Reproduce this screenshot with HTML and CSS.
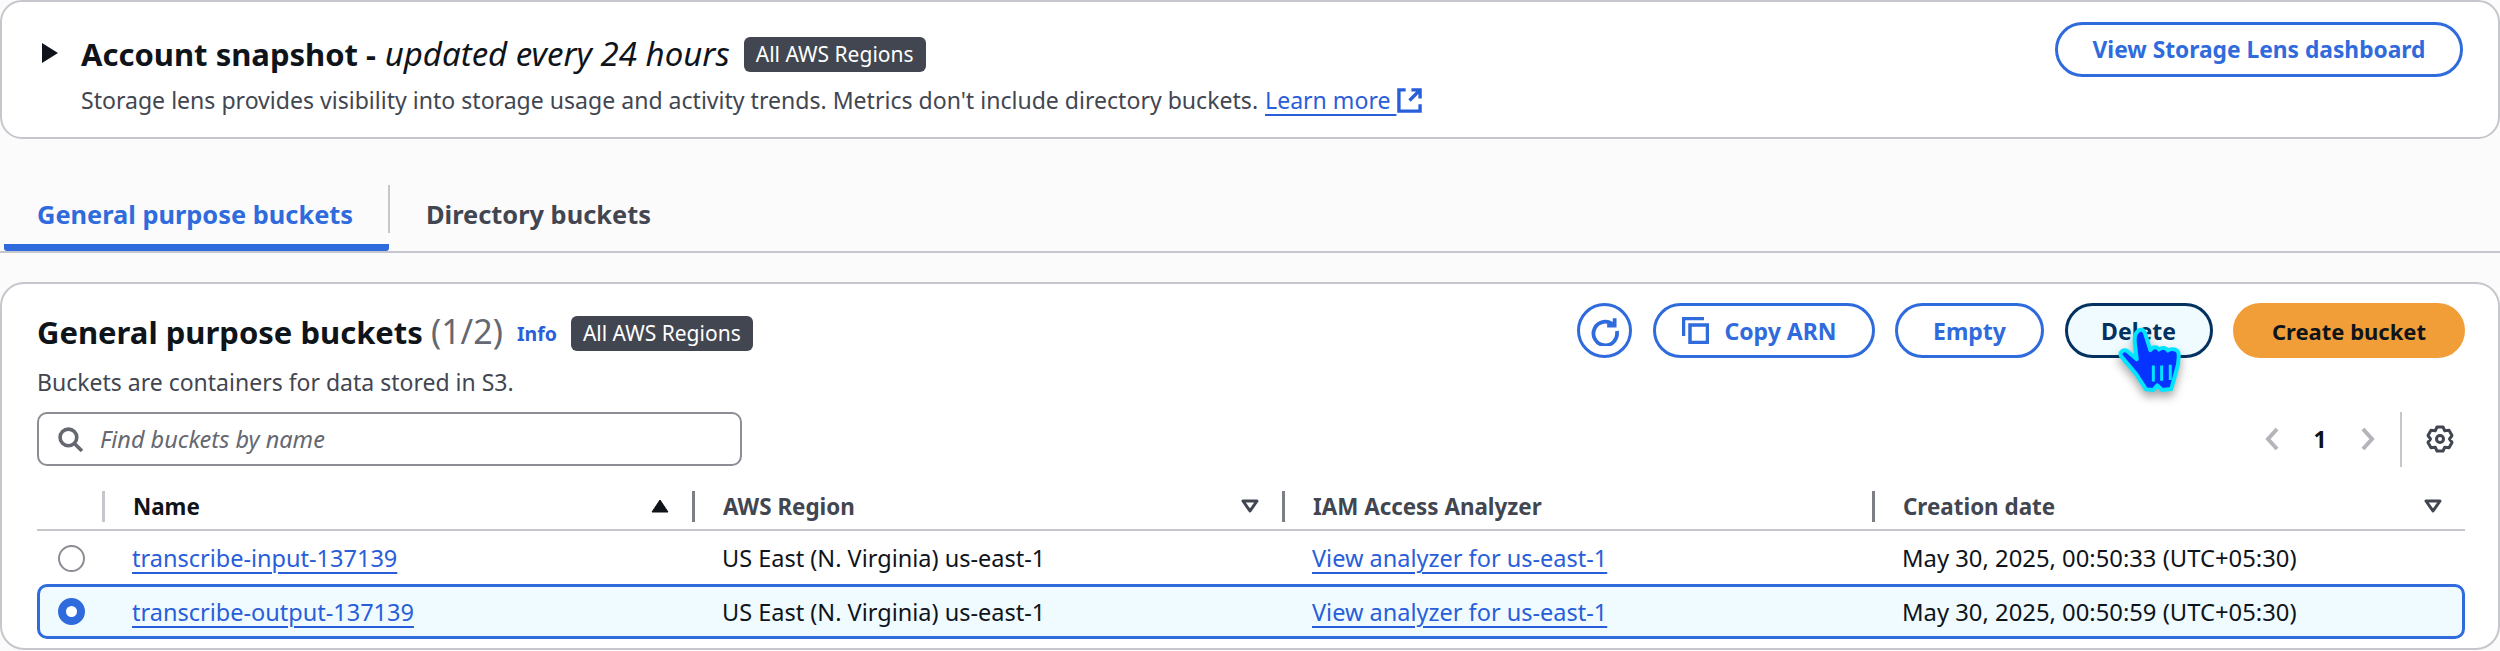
FILE: index.html
```html
<!DOCTYPE html>
<html lang="en">
<head>
  <meta charset="UTF-8">
  <title>Amazon S3 buckets</title>
  <link rel="stylesheet" href="styles.css">
</head>
<body>
  <section class="snapshot">
    <div class="snapshot-text">
      <h2 class="snapshot-title">
        <svg class="caret" viewBox="0 0 18 22"><path d="M1 1l16 10L1 21z"/></svg>
        <span><b>Account snapshot -</b> <i>updated every 24 hours</i></span>
        <span class="badge">All AWS Regions</span>
      </h2>
      <p class="snapshot-desc">Storage lens provides visibility into storage usage and activity trends. Metrics don't include directory buckets. <a href="#">Learn more&nbsp;</a>
        <svg class="ext-icon" viewBox="0 0 26 26"><path d="M9 2H2v22h22v-7M15 2h9v9M24 2L13 13"/></svg>
      </p>
    </div>
    <button class="btn btn-lens">View Storage Lens dashboard</button>
  </section>

  <nav class="tabs">
    <div class="tab tab-active">General purpose buckets</div>
    <div class="tab">Directory buckets</div>
  </nav>

  <section class="buckets">
    <div class="buckets-head">
      <div>
        <div class="buckets-title">
          <h1>General purpose buckets <span class="count">(1/2)</span></h1>
          <a class="info" href="#">Info</a>
          <span class="badge">All AWS Regions</span>
        </div>
        <p class="buckets-desc">Buckets are containers for data stored in S3.</p>
      </div>
      <div class="actions">
        <button class="btn btn-round">
          <svg viewBox="0 0 28 28"><path d="M22 8.500A11 11 0 1 0 25 14M23 2v7h-7"/></svg>
        </button>
        <button class="btn btn-copy">
          <svg viewBox="0 0 27 27"><path d="M1.500 19V1.500H22"/><path d="M8 8h17.500v17.500H8z"/></svg>
          Copy ARN
        </button>
        <button class="btn btn-empty">Empty</button>
        <div class="delete-wrap">
          <button class="btn btn-delete">Delete</button>
          <svg class="cursor" viewBox="225 45 210 220">
            <path class="hand" d="M283 68c10-10 20-6 24 8l15 48c8-12 20-12 26-2 10-8 22-6 27 3 10-8 30-4 32 8 2 18-2 40-8 58l-14 50-28 3-14-14-12 14-22-2-30-46-46-55c-4-12 8-22 20-14l28 24-6-50c-1-15 2-28 8-33z"/>
            <path class="hand-line" d="M331 170v48M356 170v46M382 168v46"/>
          </svg>
        </div>
        <button class="btn btn-primary">Create bucket</button>
      </div>
    </div>

    <div class="tools">
      <div class="search">
        <svg viewBox="0 0 24 24"><circle cx="10" cy="10" r="8"/><path d="M16 16l7 7"/></svg>
        <span>Find buckets by name</span>
      </div>
      <div class="pager">
        <svg class="chev" viewBox="0 0 14 24"><path d="M12 2L3 12l9 10"/></svg>
        <span class="page-no">1</span>
        <svg class="chev" viewBox="0 0 14 24"><path d="M2 2l9 10-9 10"/></svg>
        <span class="pager-sep"></span>
        <svg class="gear" viewBox="0 0 28 28">
          <circle cx="14" cy="14" r="3.500"/>
          <path d="M11 2h6l1.750 3.770L23 5.320l3 5.230-2.500 3.450 2.500 3.450-3 5.230-4.250-.45L17 26h-6l-1.750-3.770L5 22.680l-3-5.230L4.500 14 2 10.550l3-5.230 4.250.45z"/>
        </svg>
      </div>
    </div>

    <div class="table">
      <div class="row row-head">
        <div class="cell-radio"></div>
        <div class="cell cell-name">Name<svg class="sort sort-on" viewBox="0 0 18 14"><path d="M9 1l8 12H1z"/></svg></div>
        <div class="cell">AWS Region<svg class="sort" viewBox="0 0 18 14"><path d="M2 2h14L9 12z"/></svg></div>
        <div class="cell">IAM Access Analyzer</div>
        <div class="cell">Creation date<svg class="sort" viewBox="0 0 18 14"><path d="M2 2h14L9 12z"/></svg></div>
      </div>
      <div class="row">
        <div class="cell-radio"><span class="radio"></span></div>
        <div class="cell"><a href="#">transcribe-input-137139</a></div>
        <div class="cell">US East (N. Virginia) us-east-1</div>
        <div class="cell"><a href="#">View analyzer for us-east-1</a></div>
        <div class="cell cell-date">May 30, 2025, 00:50:33 (UTC+05:30)</div>
      </div>
      <div class="row row-selected">
        <div class="cell-radio"><span class="radio radio-on"></span></div>
        <div class="cell"><a href="#">transcribe-output-137139</a></div>
        <div class="cell">US East (N. Virginia) us-east-1</div>
        <div class="cell"><a href="#">View analyzer for us-east-1</a></div>
        <div class="cell cell-date">May 30, 2025, 00:50:59 (UTC+05:30)</div>
      </div>
    </div>
  </section>
</body>
</html>
```

FILE: styles.css
```css
* {
  box-sizing: border-box;
}
html, body {
  height: 651px;
  overflow: hidden;
}
body {
  margin: 0;
  background-color: #fbfbfc;
  font-family: "Noto Sans", sans-serif;
  font-size: 23px;
  color: #0f141a;
}
a {
  color: #295eda;
  text-decoration-thickness: 2px;
  text-underline-offset: 5px;
}
p {
  margin: 0;
}
svg {
  display: block;
  flex: none;
}

/* snapshot panel */
.snapshot {
  display: flex;
  justify-content: space-between;
  height: 139px;
  padding: 20px 35px 0 39px;
  background: #fff;
  border: 2px solid #c6c6cd;
  border-radius: 22px;
}
.snapshot-title {
  display: flex;
  align-items: center;
  gap: 22px;
  height: 36px;
  margin: 13px 0 0;
  font-size: 33px;
  font-weight: 400;
  white-space: nowrap;
}
.caret {
  width: 18px;
  height: 22px;
  fill: #0f141a;
}
.snapshot-title b {
  font-size: 31px;
  font-weight: 700;
}
.snapshot-title .badge {
  margin-left: -8px;
  margin-top: 2px;
}
.snapshot-desc {
  display: flex;
  align-items: center;
  gap: 1px;
  margin: 14px 0 0 40px;
  color: #424650;
  font-size: 23.070px;
  line-height: 30px;
  white-space: pre-wrap;
}
.ext-icon {
  width: 25px;
  height: 25px;
  fill: none;
  stroke: #295eda;
  stroke-width: 3.500;
}
.badge {
  height: 35px;
  padding: 0 12px;
  background: #424650;
  color: #fff;
  border-radius: 6px;
  font-size: 21px;
  font-weight: 400;
  line-height: 34px;
  white-space: nowrap;
}

/* buttons */
.btn {
  display: flex;
  align-items: center;
  justify-content: center;
  height: 55px;
  padding: 0;
  background: #fff;
  border: 3px solid #2f6bdc;
  border-radius: 28px;
  color: #2f6bdc;
  font-family: inherit;
  font-size: 23px;
  font-weight: 700;
  white-space: nowrap;
  cursor: pointer;
}
.btn svg {
  fill: none;
  stroke: currentColor;
  stroke-width: 3.500;
}
.btn-lens {
  width: 408px;
  font-size: 22.750px;
}
.btn-round {
  width: 55px;
}
.btn-round svg {
  width: 30px;
  height: 30px;
}
.btn-copy {
  gap: 15px;
  width: 222px;
  padding-right: 8px;
}
.btn-copy svg {
  width: 27px;
  height: 27px;
}
.btn-empty {
  width: 149px;
}
.btn-delete {
  width: 148px;
  background: #f0fbff;
  border-color: #033160;
  color: #033160;
}
.btn-primary {
  width: 232px;
  background: #f29e38;
  border-color: #f29e38;
  color: #0f141a;
  font-size: 22px;
}

/* tabs */
.tabs {
  display: flex;
  height: 114px;
  padding: 44px 0 0 4px;
  border-bottom: 2px solid #c6c6cd;
}
.tab {
  height: 68px;
  padding: 7px 34px 0 37px;
  color: #424650;
  font-size: 25.400px;
  font-weight: 700;
  line-height: 48px;
}
.tab-active {
  position: relative;
  width: 385px;
  padding-left: 33px;
  color: #2f6bdc;
  border-bottom: 7px solid #2f6bdc;
  border-radius: 0 0 3px 3px;
}
.tab-active::after {
  content: "";
  position: absolute;
  top: 2px;
  right: -1px;
  width: 2px;
  height: 48px;
  background: #c6c6cd;
}

/* buckets panel */
.buckets {
  height: 368px;
  margin-top: 29px;
  padding: 19px 33px 0 35px;
  background: #fff;
  border: 2px solid #c6c6cd;
  border-radius: 24px;
}
.buckets-head {
  display: flex;
  justify-content: space-between;
  height: 109px;
}
.buckets-title {
  display: flex;
  align-items: center;
  height: 55px;
  white-space: nowrap;
}
.buckets-title h1 {
  margin: 0 14px 0 0;
  font-size: 31px;
  font-weight: 700;
}
.buckets-title .badge {
  margin-top: 6px;
}
.count {
  color: #656871;
  font-size: 34px;
  font-weight: 400;
}
.info {
  margin: 6px 14px 0 0;
  font-size: 19.500px;
  font-weight: 700;
  text-decoration: none;
}
.buckets-desc {
  margin-top: 9px;
  color: #424650;
  line-height: 30px;
}
.actions {
  display: flex;
  gap: 20.500px;
}
.delete-wrap {
  position: relative;
}
.cursor {
  position: absolute;
  left: 53px;
  top: 21px;
  width: 70px;
  height: 73px;
  filter: drop-shadow(0 5px 5px rgba(0,0,0,0.35));
}
.hand {
  fill: #0633ff;
  stroke: #00e5ff;
  stroke-width: 12;
  stroke-linejoin: round;
}
.hand-line {
  fill: none;
  stroke: #00e5ff;
  stroke-width: 9;
}

/* search + pager */
.tools {
  display: flex;
  justify-content: space-between;
  align-items: center;
  height: 54px;
}
.search {
  display: flex;
  align-items: center;
  gap: 17px;
  width: 705px;
  height: 54px;
  padding-left: 19px;
  border: 2px solid #8c8c94;
  border-radius: 10px;
  color: #656871;
  font-size: 23.500px;
  font-style: italic;
}
.search svg {
  width: 25px;
  height: 25px;
  fill: none;
  stroke: #656871;
  stroke-width: 3.500;
}
.pager {
  display: flex;
  align-items: center;
  padding-right: 11px;
}
.chev {
  width: 14px;
  height: 24px;
  fill: none;
  stroke: #b4b4bb;
  stroke-width: 4;
}
.page-no {
  width: 82px;
  font-weight: 700;
  text-align: center;
}
.pager-sep {
  width: 2px;
  height: 55px;
  margin: 0 24px 0 25px;
  background: #c6c6cd;
}
.gear {
  width: 28px;
  height: 28px;
  fill: none;
  stroke: #424650;
  stroke-width: 3;
  stroke-linejoin: round;
}

/* table */
.table {
  margin-top: 14px;
}
.row {
  display: grid;
  grid-template-columns: 65px 590px 590px 590px 1fr;
  align-items: center;
  height: 54px;
  border: 3px solid transparent;
  font-size: 23.500px;
}
.cell {
  padding-left: 27px;
  white-space: nowrap;
}
.cell-date {
  font-size: 23.800px;
}
.cell-radio {
  display: flex;
  align-items: center;
  padding-left: 18px;
}
.row-head {
  height: 51px;
  padding-top: 3px;
  border: 0;
  border-bottom: 2px solid #c6c6cd;
  color: #424650;
  font-size: 22.400px;
  font-weight: 700;
}
.row-head .cell {
  display: flex;
  justify-content: space-between;
  align-items: center;
  height: 31px;
  padding: 0 23px 0 28px;
  border-left: 3px solid #7d7f87;
}
.row-head .cell-name {
  color: #0f141a;
  border-left-color: #c6c6cd;
}
.sort {
  width: 18px;
  height: 14px;
  fill: none;
  stroke: #424650;
  stroke-width: 3;
  stroke-linejoin: round;
}
.sort-on {
  fill: #0f141a;
  stroke: #0f141a;
  stroke-width: 1;
}
.row-selected {
  height: 55px;
  margin-top: -1px;
  background: #f0fbff;
  border-color: #2f6bdc;
  border-radius: 10px;
}
.radio {
  display: block;
  width: 27px;
  height: 27px;
  background: #fff;
  border: 2px solid #8c8c94;
  border-radius: 50%;
}
.radio-on {
  border: 8px solid #2f6bdc;
}
```
